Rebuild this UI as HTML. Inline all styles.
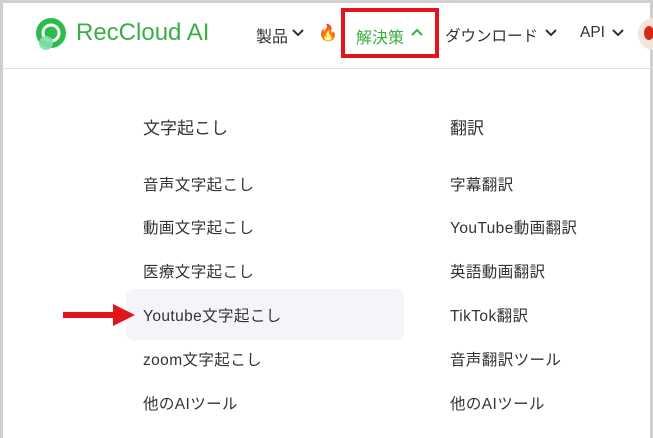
<!DOCTYPE html>
<html><head><meta charset="utf-8"><style>
*{margin:0;padding:0;box-sizing:border-box}
body{width:653px;height:438px;background:#fff;position:relative;overflow:hidden;font-family:"Liberation Sans","Noto Sans CJK JP",sans-serif;color:#333}
.frame{position:absolute;left:0;top:0;width:653px;height:438px;border:3px solid #cfcfcf;border-bottom:none}
.hline{position:absolute;left:3px;right:0;top:68px;height:1px;background:#e2e2e2}
.t{position:absolute;white-space:nowrap;font-size:15px}
.i{position:absolute;white-space:nowrap;font-size:15.5px;color:#333;letter-spacing:0.4px}
.h{position:absolute;white-space:nowrap;font-size:17px;color:#333}
</style></head><body>
<div class="frame"></div>
<div class="hline"></div>
<svg style="position:absolute;left:35px;top:17px" width="33" height="34" viewBox="0 0 33 34">
<circle cx="16" cy="16" r="15" fill="#2dbb4e"/>
<circle cx="16" cy="16" r="9.5" fill="#fff"/>
<circle cx="16" cy="16" r="6.5" fill="#2dbb4e"/>
<circle cx="11" cy="26" r="7" fill="#7fe0a8" opacity=".9"/>
</svg>
<div class="t" style="left:76px;top:19px;font-size:24px;color:#3aaf45">RecCloud AI</div>
<div class="t" style="left:256px;top:23px;font-size:16px">製品</div>
<svg style="position:absolute;left:292px;top:29px" width="12" height="8" viewBox="0 0 12 8"><path d="M1 1l5 5 5-5" stroke="#333" stroke-width="2" fill="none"/></svg>
<div class="t" style="left:318px;top:23px;font-size:16px">🔥</div>
<div style="position:absolute;left:341px;top:8px;width:98px;height:50px;border:4px solid #e3141b"></div>
<div class="t" style="left:356px;top:24px;color:#3aaf45;font-size:16px">解決策</div>
<svg style="position:absolute;left:411px;top:28px" width="12" height="8" viewBox="0 0 12 8"><path d="M1 7l5-5 5 5" stroke="#3aaf45" stroke-width="2" fill="none"/></svg>
<div class="t" style="left:445px;top:24px;font-size:15.5px">ダウンロード</div>
<svg style="position:absolute;left:545px;top:29px" width="12" height="8" viewBox="0 0 12 8"><path d="M1 1l5 5 5-5" stroke="#333" stroke-width="2" fill="none"/></svg>
<div class="t" style="left:580px;top:24px;font-size:15.5px">API</div>
<svg style="position:absolute;left:612px;top:29px" width="12" height="8" viewBox="0 0 12 8"><path d="M1 1l5 5 5-5" stroke="#333" stroke-width="2" fill="none"/></svg>
<div style="position:absolute;left:638px;top:18px;width:30px;height:32px;border-radius:50%;background:#f3e6d8"><div style="position:absolute;left:6px;top:8px;width:10px;height:14px;border-radius:50%;background:#d42a1c"></div></div>
<div style="position:absolute;left:126px;top:289px;width:278px;height:51px;border-radius:8px;background:#f4f4fa"></div>
<div class="h" style="left:143px;top:114px">文字起こし</div>
<div class="h" style="left:450px;top:114px">翻訳</div>
<div class="i" style="left:143px;top:173px">音声文字起こし</div>
<div class="i" style="left:143px;top:216px">動画文字起こし</div>
<div class="i" style="left:143px;top:260px">医療文字起こし</div>
<div class="i" style="left:143px;top:304px">Youtube文字起こし</div>
<div class="i" style="left:143px;top:348px">zoom文字起こし</div>
<div class="i" style="left:143px;top:392px">他のAIツール</div>
<div class="i" style="left:450px;top:173px">字幕翻訳</div>
<div class="i" style="left:450px;top:216px">YouTube動画翻訳</div>
<div class="i" style="left:450px;top:260px">英語動画翻訳</div>
<div class="i" style="left:450px;top:304px">TikTok翻訳</div>
<div class="i" style="left:450px;top:348px">音声翻訳ツール</div>
<div class="i" style="left:450px;top:392px">他のAIツール</div>
<svg style="position:absolute;left:62px;top:303px" width="74" height="24" viewBox="0 0 74 24"><path d="M1 9h50V1l22 11-22 11v-8H1z" fill="#e3141b"/></svg>
</body></html>
